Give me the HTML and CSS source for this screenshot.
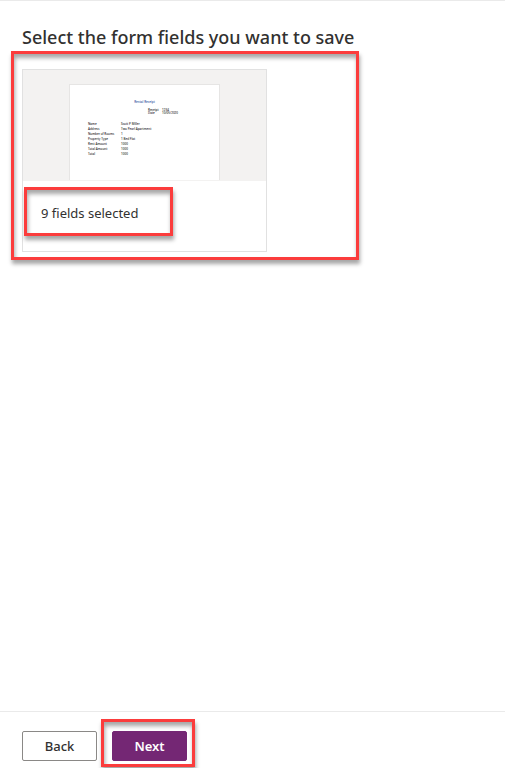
FILE: index.html
```html
<!DOCTYPE html>
<html lang="en">

<head>
    <meta charset="UTF-8">
    <meta name="viewport" content="width=device-width, initial-scale=1.0">
    <title>Select form fields</title>
    <link rel="stylesheet" href="styles.css">
</head>

<body>
    <main class="content">
        <h1 class="title">Select the form fields you want to save</h1>
        <section class="highlight highlight-card">
            <article class="card">
                <div class="preview">
                    <div class="paper">
                        <div class="paper-title">Rental Receipt</div>
                        <dl class="paper-meta">
                            <dt>Receipt</dt>
                            <dd>1234</dd>
                            <dt>Date</dt>
                            <dd>10/05/2020</dd>
                        </dl>
                        <dl class="paper-fields">
                            <dt>Name</dt>
                            <dd>Scott P Miller</dd>
                            <dt>Address</dt>
                            <dd>Two Pearl Apartment</dd>
                            <dt>Number of Rooms</dt>
                            <dd>1</dd>
                            <dt>Property Type</dt>
                            <dd>1 Bed Flat</dd>
                            <dt>Rent Amount</dt>
                            <dd>1000</dd>
                            <dt>Total Amount</dt>
                            <dd>1000</dd>
                            <dt>Total</dt>
                            <dd>1000</dd>
                        </dl>
                    </div>
                </div>
                <div class="highlight highlight-count">9 fields selected</div>
            </article>
        </section>
    </main>
    <footer class="footer">
        <button class="btn" type="button">Back</button>
        <div class="highlight highlight-next">
            <button class="btn btn-primary" type="button">Next</button>
        </div>
    </footer>
</body>

</html>
```
FILE: styles.css
```css
* {
    box-sizing: border-box;
}

body {
    display: flex;
    flex-direction: column;
    min-height: 100vh;
    margin: 0;
    border-top: 1px solid #eaeaea;
    background: #fff;
    color: #323130;
    font-family: "Segoe UI", "Noto Sans", "Open Sans", sans-serif;
}

.content {
    flex: 1;
    padding: 24px 11px;
}

.title {
    margin: 0 0 2px 11px;
    font-size: 18px;
    font-weight: 500;
    line-height: 24px;
}

/* red callout frames */
.highlight {
    border: 3px solid #fb3c3c;
    box-shadow: 1px 4px 4px rgba(0, 0, 0, 0.35), inset 1px 4px 4px rgba(0, 0, 0, 0.35);
}

.highlight-card {
    max-width: 348px;
    padding: 15px 8px 5px;
}

.card {
    max-width: 245px;
    padding-bottom: 15px;
    border: 1px solid #e1e1e1;
}

.preview {
    display: flex;
    justify-content: center;
    height: 111px;
    padding-top: 14px;
    border-bottom: 1px solid #f3f2f1;
    background: #f3f2f1;
}

.paper {
    width: 151px;
    padding: 15px 18px 0;
    border: 1px solid #e6e5e4;
    border-bottom: 0;
    background: #fff;
    color: #222;
    font-size: 3px;
    font-weight: 500;
    line-height: 5px;
}

.paper-title {
    color: #2b4f9e;
    text-align: center;
}

.paper dl {
    display: grid;
    margin: 0;
}

.paper dd {
    margin: 0;
}

.paper .paper-meta {
    grid-template-columns: 14px auto;
    justify-content: start;
    margin: 4px 0 7px 60px;
    line-height: 3px;
}

.paper-fields {
    grid-template-columns: 33px auto;
    justify-content: start;
}

.highlight-count {
    max-width: 149px;
    margin: 6px 0 0 1px;
    padding: 13px 14px 10px;
    font-size: 13px;
    font-weight: 400;
    line-height: 20px;
}

.footer {
    display: flex;
    align-items: baseline;
    gap: 4px;
    padding: 7px 22px 1px;
    border-top: 1px solid #eaeaea;
}

.btn {
    width: 75px;
    height: 30px;
    padding: 0;
    border: 1px solid #8a8886;
    border-radius: 2px;
    background: #fff;
    color: #323130;
    font-family: inherit;
    font-size: 13px;
    font-weight: 500;
    cursor: pointer;
}

.btn-primary {
    display: block;
    border-color: #742774;
    background: #742774;
    color: #fff;
    font-weight: 600;
}

.highlight-next {
    padding: 9px 5px 3px 8px;
}
```
